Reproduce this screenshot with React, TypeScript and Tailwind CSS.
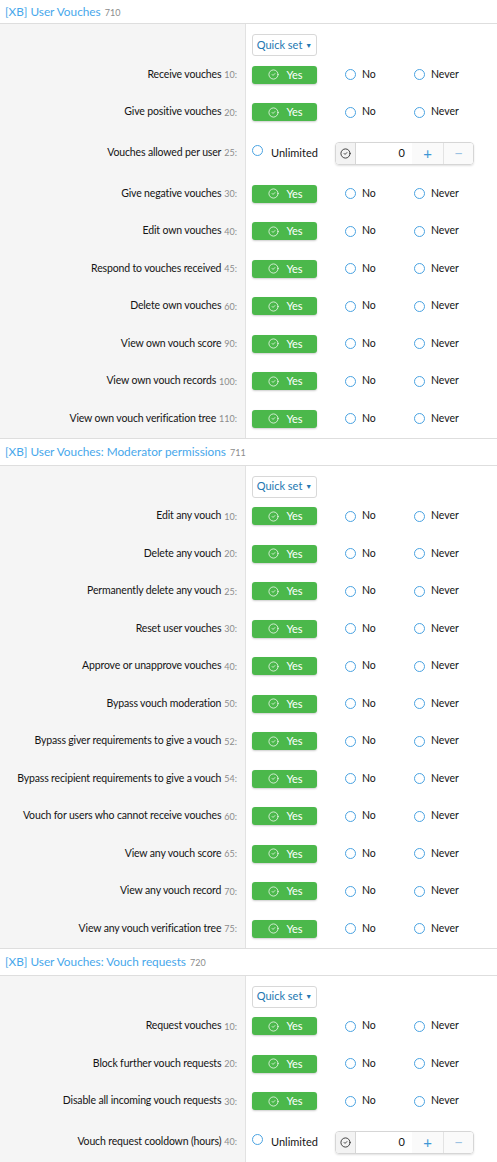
import { CircleCheck } from "lucide-react";

type Row = { label: string; hint: string; kind?: "num" };

interface Section {
  title: string;
  id: string;
  rows: Row[];
}

const SECTIONS: Section[] = [
  {
    title: "[XB] User Vouches",
    id: "710",
    rows: [
      { label: "Receive vouches", hint: "10" },
      { label: "Give positive vouches", hint: "20" },
      { label: "Vouches allowed per user", hint: "25", kind: "num" },
      { label: "Give negative vouches", hint: "30" },
      { label: "Edit own vouches", hint: "40" },
      { label: "Respond to vouches received", hint: "45" },
      { label: "Delete own vouches", hint: "60" },
      { label: "View own vouch score", hint: "90" },
      { label: "View own vouch records", hint: "100" },
      { label: "View own vouch verification tree", hint: "110" },
    ],
  },
  {
    title: "[XB] User Vouches: Moderator permissions",
    id: "711",
    rows: [
      { label: "Edit any vouch", hint: "10" },
      { label: "Delete any vouch", hint: "20" },
      { label: "Permanently delete any vouch", hint: "25" },
      { label: "Reset user vouches", hint: "30" },
      { label: "Approve or unapprove vouches", hint: "40" },
      { label: "Bypass vouch moderation", hint: "50" },
      { label: "Bypass giver requirements to give a vouch", hint: "52" },
      { label: "Bypass recipient requirements to give a vouch", hint: "54" },
      { label: "Vouch for users who cannot receive vouches", hint: "60" },
      { label: "View any vouch score", hint: "65" },
      { label: "View any vouch record", hint: "70" },
      { label: "View any vouch verification tree", hint: "75" },
    ],
  },
  {
    title: "[XB] User Vouches: Vouch requests",
    id: "720",
    rows: [
      { label: "Request vouches", hint: "10" },
      { label: "Block further vouch requests", hint: "20" },
      { label: "Disable all incoming vouch requests", hint: "30" },
      { label: "Vouch request cooldown (hours)", hint: "40", kind: "num" },
    ],
  },
];

function Radio({ label, className }: { label: string; className?: string }) {
  return (
    <span className={"flex items-center gap-[6px] text-[10.5px] " + (className ?? "")}>
      <span className="h-[11px] w-[11px] rounded-full border-[1.5px] border-[#4aa3e2] bg-white" />
      <span>{label}</span>
    </span>
  );
}

function YesNoNever() {
  return (
    <div className="flex items-center">
      <div className="flex h-[18px] w-[65px] items-center justify-center gap-[7px] rounded-[3px] bg-[#4bb84b] pl-[2px] text-[11px] text-white shadow-[0_1px_2px_rgba(0,0,0,0.2)]">
        <CircleCheck size={11} strokeWidth={1.6} />
        <span>Yes</span>
      </div>
      <Radio label="No" className="ml-[28px] w-[69px]" />
      <Radio label="Never" />
    </div>
  );
}

// number spinner with "Unlimited" toggle
function NumberRow() {
  return (
    <div className="flex items-center">
      <span className="flex w-[83px] items-center gap-[8px]">
        <span className="-mt-[6px] h-[11px] w-[11px] rounded-full border-[1.5px] border-[#4aa3e2] bg-white" />
        <span>Unlimited</span>
      </span>
      <div className="flex h-[23px] w-[139px] overflow-hidden rounded-[4px] border border-[#d6d6d6] shadow-[0_1px_2px_rgba(0,0,0,0.12)]">
        <span className="flex w-[20px] items-center justify-center border-r border-[#d6d6d6] bg-[#f3f3f3] text-[#333]">
          <CircleCheck size={11} strokeWidth={2} />
        </span>
        <span className="flex w-[56px] items-center justify-end bg-white pr-[7px]">0</span>
        <span className="flex w-[31px] items-center justify-center bg-[#fafafa] text-[15px] leading-none text-[#3f97d6]">+</span>
        <span className="flex w-[30px] items-center justify-center border-l border-[#e3e3e3] bg-[#fafafa] text-[15px] leading-none text-[#9cc2e2]">−</span>
      </div>
    </div>
  );
}

export default function App() {
  return (
    <div
      className="w-[497px] overflow-hidden bg-white text-[11px] text-[#141414]"
      style={{ fontFamily: 'Lato, "Noto Sans", sans-serif' }}
    >
      {SECTIONS.map((section, si) => (
        <div key={section.id}>
          <div
            className={
              "flex items-center border-b border-[#dedede] bg-white px-[5px] " +
              (si === 0 ? "h-[24px]" : "h-[28px] border-t")
            }
          >
            <span className="text-[11.8px] text-[#47a7eb]">{section.title}</span>
            <span className="ml-[4px] mt-[2px] text-[9px] text-[#8c8c8c]">{section.id}</span>
          </div>

          {/* Quick set */}
          <div className="flex">
            <div className="w-[246px] shrink-0 border-r border-[#e2e2e2] bg-[#f5f5f5]" />
            <div className="pl-[6px] pt-[10px]">
              <div className="flex h-[22px] w-[65px] items-center justify-center gap-[3px] rounded-[3px] border border-[#d8d8d8] bg-white text-[#2577b1]">
                <span>Quick set</span>
                <span className="text-[7px]">▼</span>
              </div>
            </div>
          </div>

          {section.rows.map((row) => (
            <div key={row.label} className={"flex " + (row.kind === "num" ? "h-[44px]" : "h-[37.5px]")}>
              <div className="flex w-[246px] shrink-0 items-center justify-end whitespace-nowrap border-r border-[#e2e2e2] bg-[#f5f5f5] pr-[8px] text-[10.5px] tracking-[-0.15px]">
                <span>{row.label}</span>
                <span className="ml-[3px] text-[9px] tracking-normal text-[#8c8c8c]">{row.hint}:</span>
              </div>
              <div className="flex items-center pl-[6px]">
                {row.kind === "num" ? <NumberRow /> : <YesNoNever />}
              </div>
            </div>
          ))}
        </div>
      ))}
    </div>
  );
}
